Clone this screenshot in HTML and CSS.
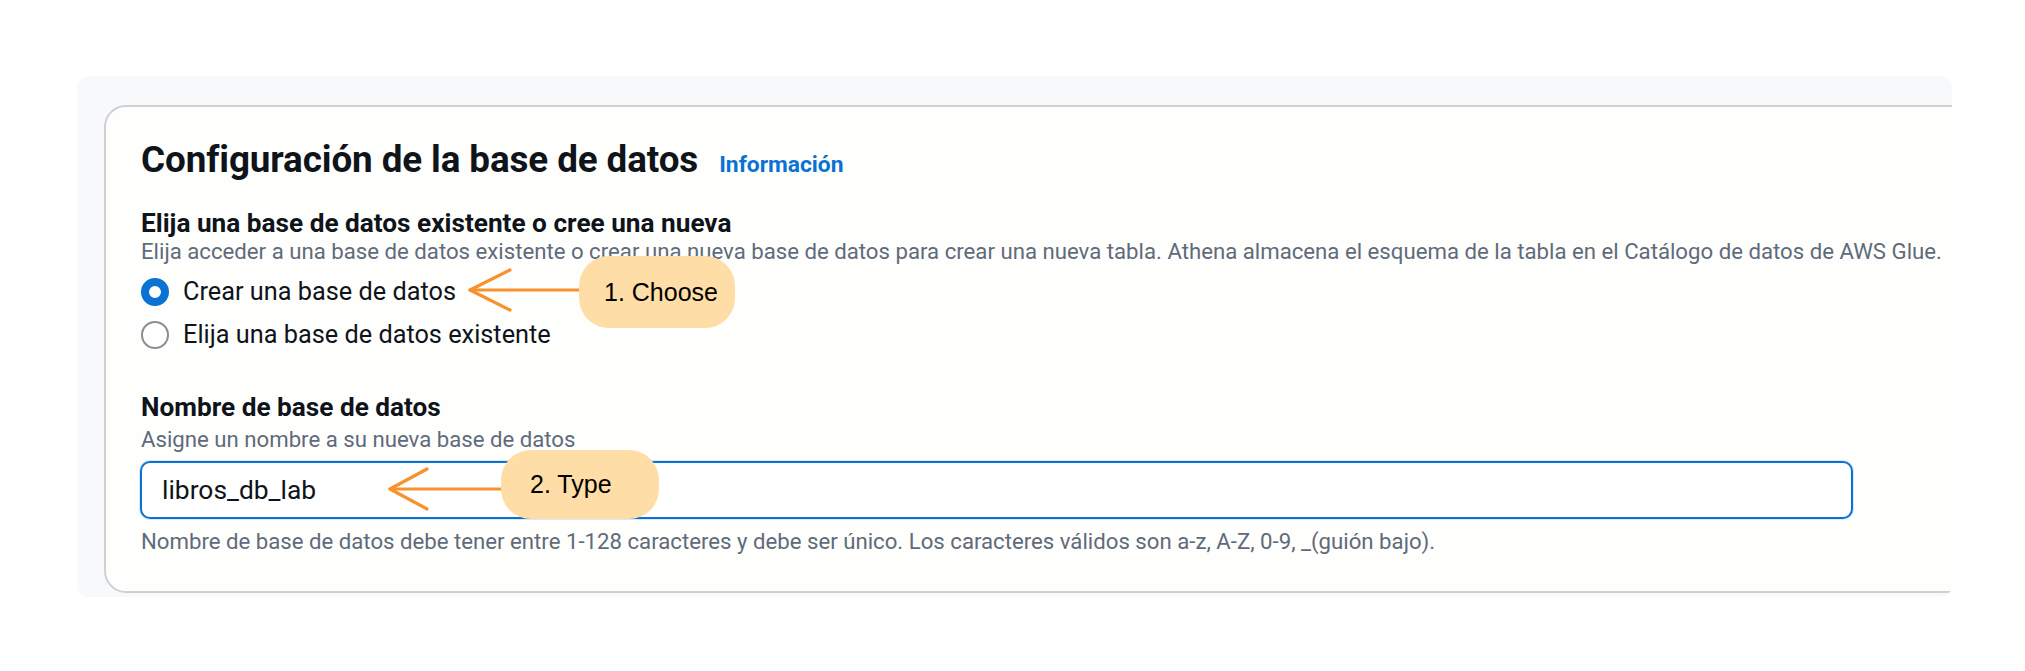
FILE: index.html
```html
<!DOCTYPE html>
<html lang="es">
<head>
<meta charset="utf-8">
<title>Configuración de la base de datos</title>
<link rel="stylesheet" href="styles.css">
</head>
<body>
<div class="panel">
  <section class="card">
    <h2 class="title">Configuración de la base de datos <a class="info" href="#">Información</a></h2>

    <div class="field">
      <div class="label">Elija una base de datos existente o cree una nueva</div>
      <div class="desc">Elija acceder a una base de datos existente o crear una nueva base de datos para crear una nueva tabla. Athena almacena el esquema de la tabla en el Catálogo de datos de AWS Glue.</div>
      <div class="radios">
        <label class="radio"><span class="dot checked"></span><span>Crear una base de datos</span></label>
        <label class="radio"><span class="dot"></span><span>Elija una base de datos existente</span></label>
      </div>
    </div>

    <div class="field field-name">
      <div class="label">Nombre de base de datos</div>
      <div class="desc desc-name">Asigne un nombre a su nueva base de datos</div>
      <div class="input">libros_db_lab</div>
      <div class="desc constraint">Nombre de base de datos debe tener entre 1-128 caracteres y debe ser único. Los caracteres válidos son a-z, A-Z, 0-9, _(guión bajo).</div>
    </div>

    <svg class="arrows" width="700" height="480" viewBox="0 0 700 480" aria-hidden="true">
      <g fill="none" stroke="#f7922f" stroke-width="3.2" stroke-linecap="round" stroke-linejoin="round">
        <path d="M364 183 H474"/>
        <path d="M404 163 L364 183 L404 203"/>
        <path d="M284 382 H396"/>
        <path d="M321 362 L284 382 L321 402"/>
      </g>
    </svg>
    <div class="bubble bubble-1">1. Choose</div>
    <div class="bubble bubble-2">2. Type</div>
  </section>
</div>
</body>
</html>
```
FILE: styles.css
```css
html, body {
  margin: 0;
  padding: 0;
  background: #ffffff;
}
body {
  font-family: Roboto, "Noto Sans", sans-serif;
  color: #000716;
}
.panel {
  margin: 76px 0 0 77px;
  width: 1875px;
  height: 521px;
  box-sizing: border-box;
  padding: 29px 0 0 27px;
  background: #f8f9fb;
  border-radius: 12px;
  overflow: hidden;
}
.card {
  position: relative;
  box-sizing: border-box;
  width: 1900px;
  height: 488px;
  padding: 31px 0 0 35px;
  background: #fefefd;
  border: 2px solid #cfd0d5;
  border-radius: 22px;
}
.title {
  margin: 0;
  font-size: 36.8px;
  line-height: 44px;
  font-weight: 700;
  letter-spacing: -0.1px;
  color: #0f141a;
}
.info {
  margin-left: 12px;
  font-size: 22.8px;
  font-weight: 700;
  color: #0972d3;
  text-decoration: none;
  letter-spacing: 0;
}
.field {
  margin-top: 22px;
}
.label {
  font-size: 26.2px;
  line-height: 28px;
  font-weight: 700;
  color: #0f141a;
}
.desc {
  font-size: 22.2px;
  line-height: 28px;
  color: #5f6b7a;
}
.radios {
  margin-top: 5px;
  display: flex;
  flex-direction: column;
}
.radio {
  display: flex;
  align-items: center;
  gap: 14px;
  height: 43px;
  font-size: 25.3px;
  color: #0f141a;
}
.dot {
  box-sizing: border-box;
  width: 28px;
  height: 28px;
  border-radius: 50%;
  border: 2px solid #8c8c94;
  background: #ffffff;
  flex: none;
}
.dot.checked {
  border: 8.5px solid #0972d3;
}
.field-name {
  margin-top: 37px;
}
.desc-name {
  margin-top: 4px;
}
.input {
  margin: 8px 0 0 -1px;
  box-sizing: border-box;
  width: 1713px;
  height: 58px;
  border: 2px solid #0972d3;
  border-radius: 10px;
  padding: 0 20px;
  display: flex;
  align-items: center;
  font-size: 26.4px;
  color: #0f141a;
  background: #ffffff;
  box-shadow: 0 0 0 1px rgba(9, 114, 211, 0.15);
}
.constraint {
  margin-top: 8px;
}
.arrows {
  position: absolute;
  left: 0;
  top: 0;
  pointer-events: none;
}
.bubble {
  position: absolute;
  box-sizing: border-box;
  display: flex;
  align-items: center;
  padding-left: 25px;
  background: #fedda6;
  border-radius: 30px;
  font-family: "Liberation Sans", Arial, sans-serif;
  font-size: 25px;
  color: #000000;
}
.bubble-1 {
  left: 473px;
  top: 149px;
  width: 156px;
  height: 72px;
}
.bubble-2 {
  left: 395px;
  top: 343px;
  width: 158px;
  height: 69px;
  padding-left: 29px;
}
```
